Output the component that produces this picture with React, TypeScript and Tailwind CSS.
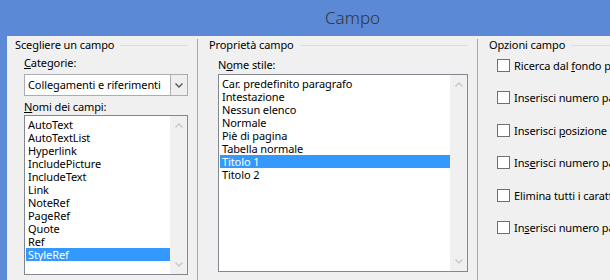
import { ReactNode } from "react";

const campi = [
  "AutoText",
  "AutoTextList",
  "Hyperlink",
  "IncludePicture",
  "IncludeText",
  "Link",
  "NoteRef",
  "PageRef",
  "Quote",
  "Ref",
  "StyleRef",
];

const stili = [
  "Car. predefinito paragrafo",
  "Intestazione",
  "Nessun elenco",
  "Normale",
  "Piè di pagina",
  "Tabella normale",
  "Titolo 1",
  "Titolo 2",
];

const opzioni: ReactNode[] = [
  <>Ricerca dal <u>f</u>ondo pagina verso l'inizio</>,
  <>Inserisci numero paragrafo</>,
  <>Inserisci <u>p</u>osizione relativa</>,
  <>Ins<u>e</u>risci numero paragrafo senza contesto</>,
  <>Elimina tutti i caratteri non delimitatori</>,
  <>In<u>s</u>erisci numero paragrafo nel contesto completo</>,
];

function Chevron({ up, className }: { up?: boolean; className?: string }) {
  return (
    <svg width="8" height="5" viewBox="0 0 8 5" className={className}>
      <path
        d={up ? "M0.5 4.5 L4 1 L7.5 4.5" : "M0.5 0.5 L4 4 L7.5 0.5"}
        fill="none"
        stroke="currentColor"
        strokeWidth="1.4"
      />
    </svg>
  );
}

function GroupHeader({ title }: { title: string }) {
  return (
    <div className="flex items-center gap-[6px] h-[14px] leading-[14px]">
      <span className="whitespace-nowrap">{title}</span>
      <div className="flex-1 h-px bg-[#dcdcdc]" />
    </div>
  );
}

function ListBox({ items, selected, height }: { items: string[]; selected: string; height: string }) {
  return (
    <div className={`flex border border-[#828790] bg-white ${height}`}>
      <div className="flex-1 pt-[2px] pl-px">
        {items.map((it) => (
          <div
            key={it}
            className={
              it === selected
                ? "h-[13px] leading-[13px] pl-[2px] bg-[#3399ff] text-white"
                : "h-[13px] leading-[13px] pl-[2px]"
            }
          >
            {it}
          </div>
        ))}
      </div>
      <div className="w-[17px] bg-[#f0f0f0] flex flex-col items-center justify-between py-[7px] text-[#c8c8c8]">
        <Chevron up />
        <Chevron />
      </div>
    </div>
  );
}

export default function App() {
  return (
    <div
      className="w-[610px] h-[280px] overflow-hidden flex flex-col bg-[#5b89d6] text-[11px] tracking-[-0.1px] text-black"
      style={{ fontFamily: '"Noto Sans", "Open Sans", sans-serif' }}
    >
      {/* Title bar */}
      <div className="h-[36px] shrink-0 flex items-center pl-[325px] text-[17px] tracking-normal text-[#333] font-light leading-none pb-[2px]">
        Campo
      </div>

      {/* Body */}
      <div className="flex-1 ml-[7px] bg-[#f0f0f0] flex min-h-0">
        {/* Scegliere un campo */}
        <div className="w-[190px] shrink-0 pl-[8px] pr-[9px] pt-[2px]">
          <GroupHeader title="Scegliere un campo" />
          <div className="ml-[9px]">
            <div className="mt-[4px] h-[14px] leading-[14px]">
              <u>C</u>ategorie:
            </div>
            <div className="mt-[4px] flex h-[22px] border border-[#abadb3] bg-white">
              <div className="flex-1 pl-[3px] leading-[20px] whitespace-nowrap overflow-hidden">Collegamenti e riferimenti</div>
              <div className="w-[17px] border-l border-[#abadb3] bg-[#efefef] flex items-center justify-center text-[#555]">
                <Chevron />
              </div>
            </div>
            <div className="mt-[4px] h-[14px] leading-[14px]">
              <u>N</u>omi dei campi:
            </div>
            <div className="mt-px">
              <ListBox items={campi} selected="StyleRef" height="h-[160px]" />
            </div>
          </div>
        </div>

        <div className="w-px bg-[#a9a9a9] mt-[3px]" />

        {/* Proprietà campo */}
        <div className="w-[279px] shrink-0 pl-[11px] pr-[9px] pt-[2px]">
          <GroupHeader title="Proprietà campo" />
          <div className="ml-[9px]">
            <div className="mt-[6px] h-[14px] leading-[14px]">
              N<u>o</u>me stile:
            </div>
            <div className="mt-[2px]">
              <ListBox items={stili} selected="Titolo 1" height="h-[198px]" />
            </div>
          </div>
        </div>

        <div className="w-px bg-[#a9a9a9] mt-[3px]" />

        {/* Opzioni campo */}
        <div className="flex-1 min-w-0 pl-[11px] pt-[2px]">
          <GroupHeader title="Opzioni campo" />
          <div className="ml-[8px] mt-[7px] flex flex-col gap-[19.4px]">
            {opzioni.map((o, i) => (
              <div key={i} className="flex items-center gap-[4px] h-[13px] whitespace-nowrap">
                <div className="w-[13px] h-[13px] shrink-0 border border-[#707070] bg-white" />
                <span className="leading-[13px]">{o}</span>
              </div>
            ))}
          </div>
        </div>
      </div>
    </div>
  );
}
